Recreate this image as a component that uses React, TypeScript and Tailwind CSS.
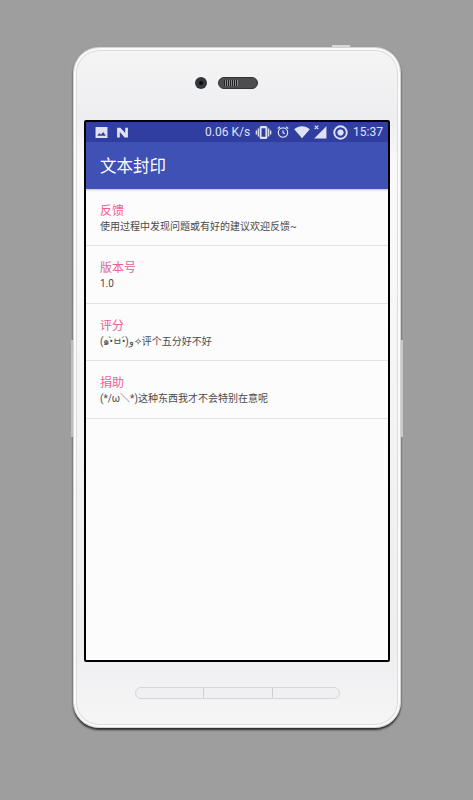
const rows = [
  { title: "反馈", desc: "使用过程中发现问题或有好的建议欢迎反馈~" },
  { title: "版本号", desc: "1.0" },
  { title: "评分", desc: "(๑•̀ㅂ•́)و✧评个五分好不好" },
  { title: "捐助", desc: "(*/ω＼*)这种东西我才不会特别在意呢" },
];

function StatusIcons() {
  return (
    <div className="flex items-center text-[#dfe2f3]">
      <svg className="w-[17px] h-[13px] ml-[5px]" viewBox="0 0 24 20" fill="currentColor">
        <path d="M8.500 0h7A2.500 2.500 0 0 1 18 2.500v15a2.500 2.500 0 0 1-2.500 2.500h-7A2.500 2.500 0 0 1 6 17.500v-15A2.500 2.500 0 0 1 8.500 0m.500 3.500v13h6v-13zM0 7h2v6H0zM3 4h2v12H3zM19 4h2v12h-2zM22 7h2v6h-2z" fillRule="evenodd" />
      </svg>
      <svg className="w-[14px] h-[14px] ml-[4px]" viewBox="0 0 24 24" fill="none" stroke="currentColor" strokeWidth="2">
        <circle cx="12" cy="13" r="8" />
        <path d="M12 9v4l3 2M3 6l4-3M21 6l-4-3" />
      </svg>
      <svg className="w-[16px] h-[13px] ml-[4px]" viewBox="0 0 24 20" fill="currentColor">
        <path d="M12 19 0 5c3.500-3 7.500-4.500 12-4.500S20.500 2 24 5z" />
      </svg>
      <svg className="w-[14px] h-[14px] ml-[3px]" viewBox="0 0 24 24" fill="currentColor">
        <path d="M23 2v21H2z" />
        <path d="M3 1l6 6M9 1 3 7" stroke="currentColor" strokeWidth="2" />
      </svg>
      <svg className="w-[15px] h-[15px] ml-[6px]" viewBox="0 0 24 24" fill="none" stroke="currentColor">
        <circle cx="12" cy="12" r="10" strokeWidth="3" />
        <circle cx="12" cy="12" r="4.500" fill="currentColor" />
      </svg>
    </div>
  );
}

function PhoneScreen() {
  return (
    <div className="w-[306px] h-[542px] border-2 border-black rounded-[2px] bg-[#fcfcfc] flex flex-col overflow-hidden">
      <div className="h-5 bg-[#303f9f] flex items-center pl-[9px] pr-[5px] text-[#dfe2f3]">
        <svg className="w-[13px] h-[13px]" viewBox="0 0 24 24" fill="currentColor">
          <path d="M1 2h22v20H1zm3 16h16l-5-7-4 5-3-3z" fillRule="evenodd" />
        </svg>
        <svg className="w-[13px] h-[13px] ml-[8px]" viewBox="0 0 24 24" fill="currentColor">
          <path d="M2 3h6l9 10V3h5v18h-6L7 11v10H2z" />
        </svg>
        <span className="ml-auto text-[12px] leading-5">0.06 K/s</span>
        <StatusIcons />
        <span className="ml-[5px] text-[12px] leading-5">15:37</span>
      </div>
      <div className="h-[47px] bg-[#3f51b5] flex items-center pl-[14px] pt-[3px] text-white text-[16.500px] shadow-[0_1px_2px_rgba(0,0,0,0.25)]">
        文本封印
      </div>
      {rows.map((row) => (
        <div key={row.title} className="h-[57.400px] border-b border-[#e2e2e2] pl-[14px] pt-[14px]">
          <div className="text-[12px] leading-[17px] text-[#ec5f92]">{row.title}</div>
          <div className="text-[10px] leading-[14px] text-[#4a4a4a]">{row.desc}</div>
        </div>
      ))}
    </div>
  );
}

export default function App() {
  return (
    <div className="w-[473px] h-[800px] bg-[#9e9e9e] pt-[47px] pl-[73px] font-['Roboto','Noto_Sans_CJK_SC',sans-serif]">
      <div className="relative w-[328px] h-[681px] rounded-[26px] border border-[#d4d4d4] bg-[linear-gradient(180deg,#f5f5f6,#eeeef0_10%,#fafafb_18%,#eeeef0_88%,#f6f6f7)] shadow-[0_2px_2px_rgba(25,25,25,0.85),inset_0_0_0_2px_#fbfbfb,inset_0_0_0_3px_#dcdcdc] flex flex-col items-center">
        <div className="absolute -top-[3px] right-[50px] w-[18px] h-[2px] bg-[#d8d8d8]" />
        <div className="absolute -left-[3px] top-[292px] w-[2px] h-[97px] bg-[#bdbdbd]" />
        <div className="absolute -right-[3px] top-[292px] w-[2px] h-[97px] bg-[#c8c8c8]" />
        <div className="h-[72px] w-full flex items-center justify-center gap-[11px] pb-[2px] pr-[22px]">
          <div className="w-3 h-3 rounded-full bg-[#33363b] flex items-center justify-center">
            <div className="w-1 h-1 rounded-full bg-[#0b0b0e]" />
          </div>
          <div className="w-[40px] h-3 rounded-full bg-[#4d4d4f] border border-[#333] flex items-center pl-[5px]">
            <div className="w-[14px] h-[6px] bg-[repeating-linear-gradient(90deg,#222_0,#222_1px,#8a8a8a_1px,#8a8a8a_2px)]" />
          </div>
        </div>
        <PhoneScreen />
        <div className="mt-[25px] w-[205px] h-[12px] rounded-full border border-[#d5d5d7] bg-[#f0f0f2] flex">
          <div className="w-[68px] border-r border-[#cfcfd1]" />
          <div className="w-[69px] border-r border-[#cfcfd1]" />
        </div>
      </div>
    </div>
  );
}
